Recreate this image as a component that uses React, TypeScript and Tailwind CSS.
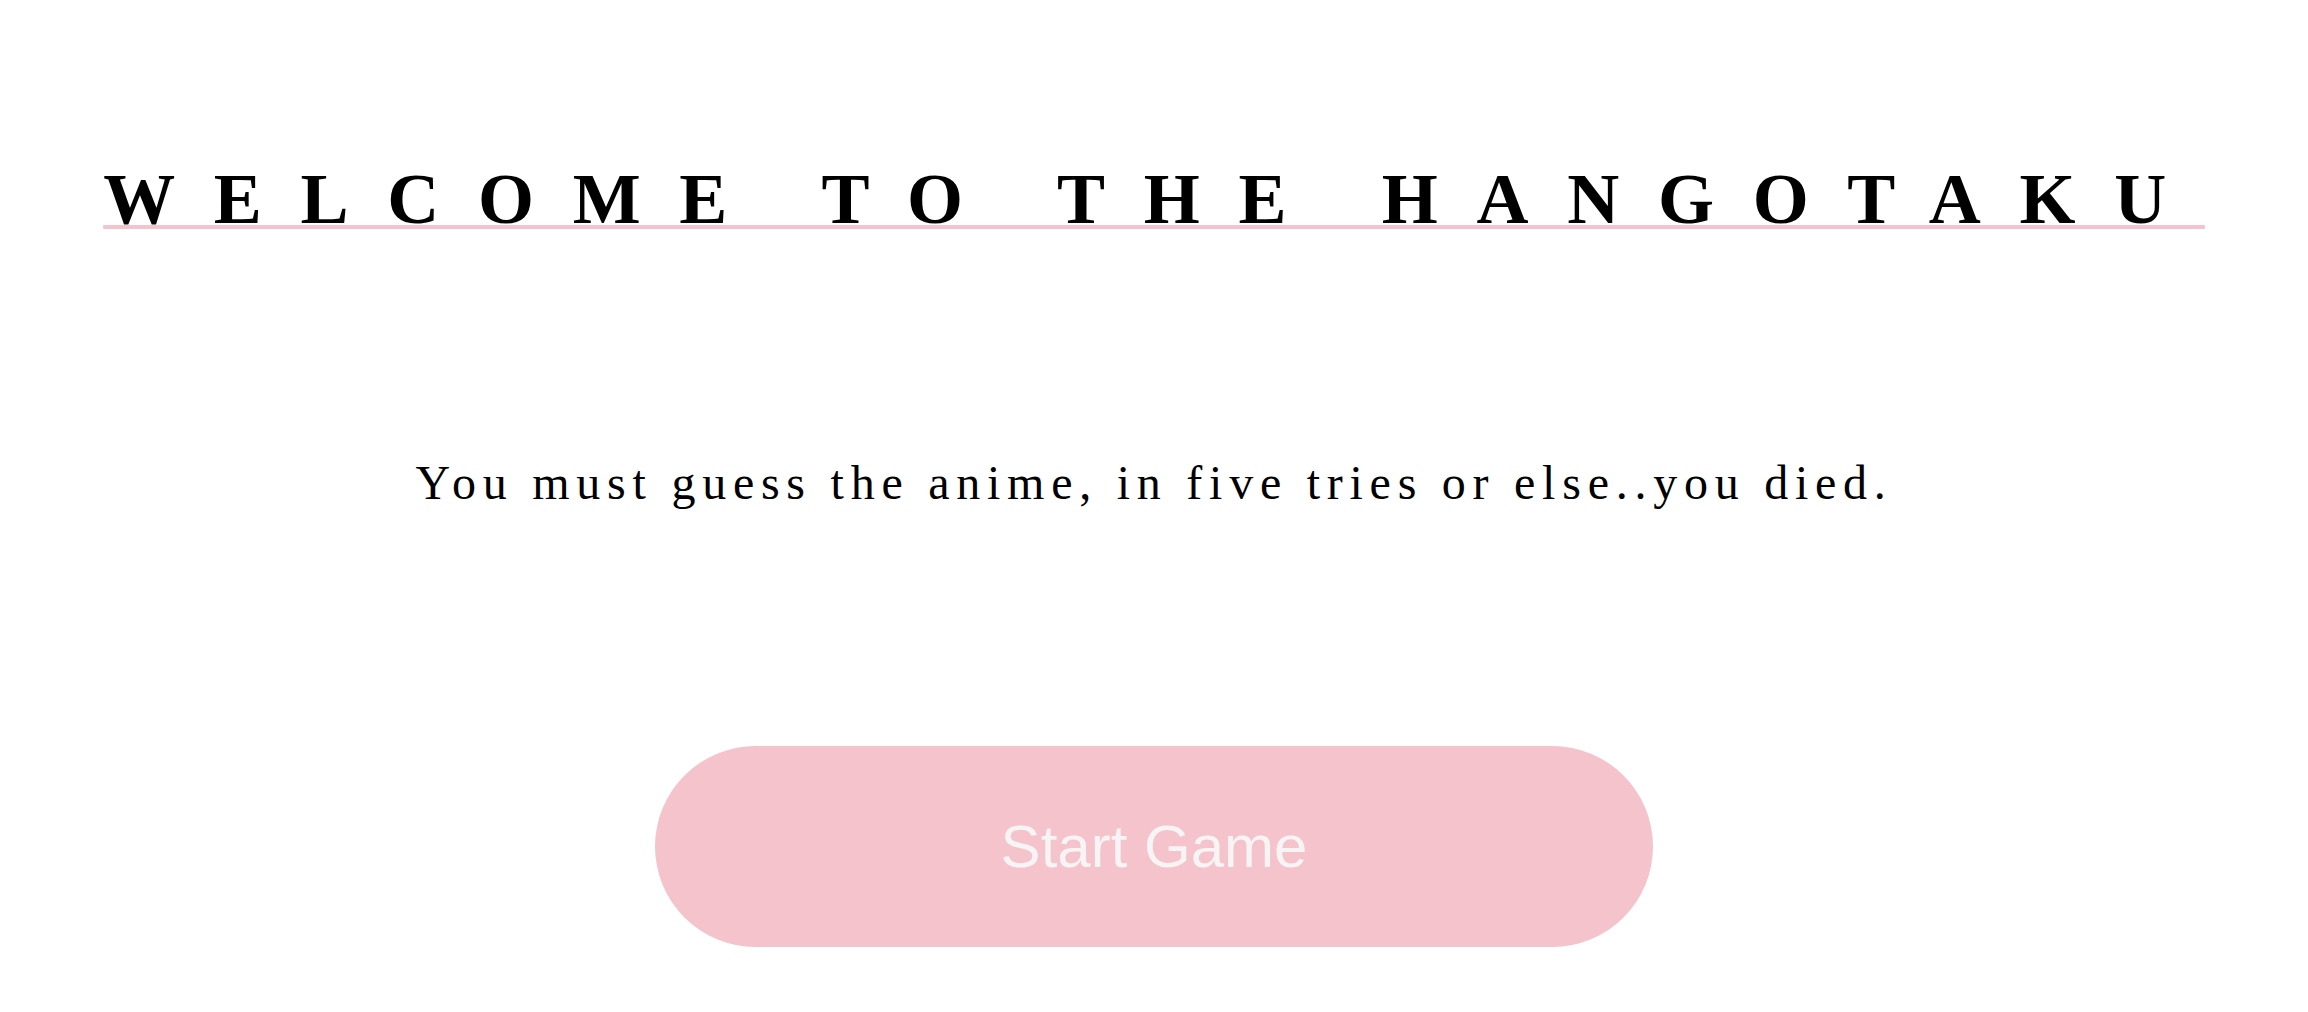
import React from 'react';

export default function App() {
  const [started, setStarted] = React.useState(false);

  return (
    <div className="min-h-screen w-full bg-white flex flex-col items-center pt-[163px]">
      <h1 className="font-['Liberation_Serif',serif] text-[72px] leading-none font-bold text-black tracking-[38.7px] underline decoration-[#f4c3cc] decoration-4 underline-offset-[2px] whitespace-nowrap">
        WELCOME TO THE HANGOTAKU
      </h1>

      <p className="mt-[224px] font-['Liberation_Serif',serif] text-[48px] leading-none text-black tracking-[6.75px] whitespace-nowrap">
        You must guess the anime, in five tries or else..you died.
      </p>

      <button
        onClick={() => setStarted(!started)}
        className="mt-[239px] w-[998px] h-[201px] rounded-full bg-[#f4c3cc] text-[#f6f4f4] font-['Liberation_Sans',Arial,sans-serif] text-[60px] flex items-center justify-center"
      >
        Start Game
      </button>
    </div>
  );
}
